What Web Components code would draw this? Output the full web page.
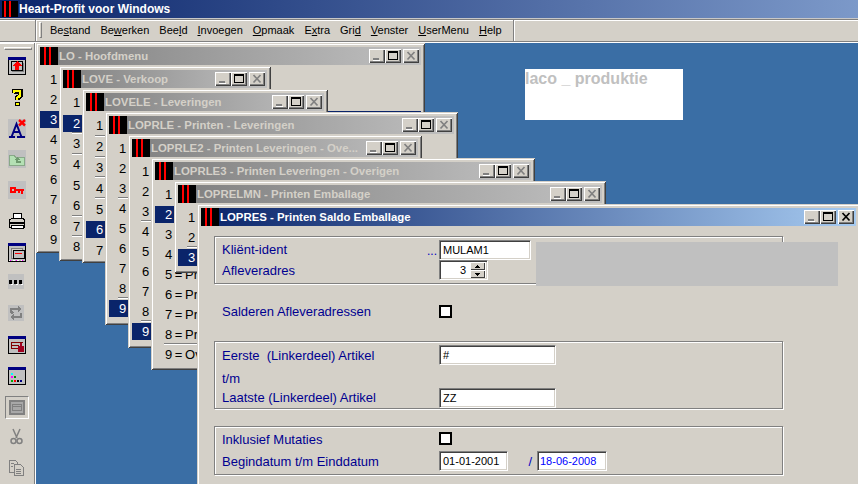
<!DOCTYPE html>
<html lang="nl">
<head>
<meta charset="utf-8">
<title>Heart-Profit voor Windows</title>
<style>
html, body { margin: 0; padding: 0; background: #d4d0c8; }
body { width: 858px; height: 484px; overflow: hidden; font-family: "Liberation Sans", Arial, sans-serif; }
</style>
</head>
<body>
<app-frame>
  <app-title slot="title">Heart-Profit voor Windows</app-title>
  <app-menu slot="menu">
    <span>Be<u>s</u>tand</span><span>Be<u>w</u>erken</span><span>Bee<u>l</u>d</span><span><u>I</u>nvoegen</span><span><u>O</u>pmaak</span><span>E<u>x</u>tra</span><span>Gri<u>d</u></span><span><u>V</u>enster</span><span><u>U</u>serMenu</span><span><u>H</u>elp</span>
  </app-menu>
  <tool-bar slot="tools">
    <svg viewBox="0 0 18 20"><rect width="18" height="18" fill="#000"/><rect x="1" y="3" width="16" height="14" fill="#c0c0c0"/><rect width="18" height="3" fill="#000080"/><rect x="4" y="6" width="12" height="9" fill="#808080"/><rect x="3.500" y="4.500" width="11" height="9" fill="#c0c0c0" stroke="#000"/><path d="M9 4l5 5h-3v4H7V9H4z" fill="#f00"/></svg>
    <svg viewBox="0 0 18 20"><path d="M6 5V3h6v5l-3 2v2" fill="none" stroke="#000" stroke-width="5"/><rect x="6.500" y="14" width="5" height="4" fill="#000"/><path d="M6 5V3h6v5l-3 2v2" fill="none" stroke="#ff0" stroke-width="2.500"/><rect x="7.500" y="15" width="3" height="2" fill="#ff0"/></svg>
    <svg viewBox="0 0 18 20" style="shape-rendering:auto"><rect width="18" height="19" fill="#c0c0c0"/><path d="M1 18h6M9 18h8M3.500 18L8.500 5l5 13M5 13h7" fill="none" stroke="#000080" stroke-width="2"/><path d="M11 1l6 5.500M17 1l-6 5.500" stroke="#f00" stroke-width="2.400"/></svg>
    <svg viewBox="0 0 18 20"><rect width="18" height="18" fill="#c0c0c0"/><path d="M1.500 5.500h5l1 2h9v8h-15z" fill="#b4e0b4" stroke="#88a888"/><path d="M9 7l-3 3h2v3h5v-2h-3v-1h2z" fill="#6f9a6f"/></svg>
    <svg viewBox="0 0 18 20"><rect width="18" height="18" fill="#c0c0c0"/><circle cx="5" cy="9" r="2.500" fill="none" stroke="#f00" stroke-width="2"/><path d="M7 8h9v2h-1v3h-2v-3h-1v2h-2v-2H7z" fill="#f00"/></svg>
    <svg viewBox="0 0 18 20"><path d="M5 1h8l1 5H5z" fill="#fff" stroke="#000"/><path d="M1.500 8l3-2h10l2 2v7h-15z" fill="#d4d0c8" stroke="#000"/><path d="M2 11h14" stroke="#000" stroke-width="2"/><rect x="3" y="13" width="12" height="3" fill="#fff" stroke="#000"/></svg>
    <svg viewBox="0 0 18 20"><rect width="18" height="19" fill="#000"/><rect x="1" y="3" width="16" height="15" fill="#c0c0c0"/><rect width="18" height="3" fill="#000080"/><rect x="3" y="5" width="11" height="10" fill="#d4d0c8" stroke="#808080"/><rect x="5" y="7" width="11" height="8" fill="#c0c0c0" stroke="#000"/><path d="M7 10h7" stroke="#f00"/><path d="M1 17h16" stroke="#fff" stroke-dasharray="2 2"/><path d="M2 17h14" stroke="#f0f" stroke-dasharray="1 5"/></svg>
    <svg viewBox="0 0 18 20"><rect width="16" height="15" fill="#c0c0c0"/><path d="M1 6h3v4H1zM6 6h3v4H6zM11 6h3v4h-3z" fill="#000"/><path d="M3 10h2M8 10h2M13 10h2" stroke="#fff"/></svg>
    <svg viewBox="0 0 18 20"><rect width="16" height="16" fill="#c0c0c0"/><path d="M3 8V4h8M3 9l2-2M13 8v4H5" fill="none" stroke="#808080" stroke-width="1.500"/><path d="M10 1l4 3-4 3zM6 9l-4 3 4 3z" fill="#808080"/></svg>
    <svg viewBox="0 0 18 20"><rect width="18" height="18" fill="#000"/><rect x="1" y="3" width="16" height="14" fill="#c0c0c0"/><rect width="18" height="3" fill="#000080"/><path d="M3 6v6h8M3 6h12M3 9h8" fill="none" stroke="#800000"/><rect x="10" y="10" width="6" height="6" rx="1" fill="#a00020"/><rect x="12" y="7" width="2" height="4" fill="#a00020"/></svg>
    <svg viewBox="0 0 18 20"><rect width="18" height="18" fill="#000"/><rect x="1" y="3" width="16" height="14" fill="#c0c0c0"/><rect width="18" height="3" fill="#000080"/><path d="M3 6h2v2H3z" fill="#0ff"/><path d="M3 9h2v2H3z" fill="#f0f"/><path d="M6 9h2v2H6z" fill="#080"/><path d="M3 13h2v2H3z" fill="#0a0"/><path d="M6 13h2v2H6z" fill="#f00"/><path d="M9 13h2v2H9z" fill="#000"/><path d="M12 13h2v2h-2z" fill="#000080"/></svg>
    <span class="pressed"><svg viewBox="0 0 16 16"><rect width="16" height="15" fill="#808080"/><rect x="2" y="2" width="12" height="11" fill="#a8a8a8"/><rect x="3.500" y="4.500" width="9" height="6" fill="none" stroke="#808080"/><path d="M4 6.500h8" stroke="#808080"/></svg></span>
    <svg viewBox="0 0 18 20" style="shape-rendering:auto"><path d="M5 1l4 9M12 1l-4 9" stroke="#808080" stroke-width="1.500"/><circle cx="5.500" cy="13" r="2.500" fill="none" stroke="#808080" stroke-width="1.500"/><circle cx="11.500" cy="13" r="2.500" fill="none" stroke="#808080" stroke-width="1.500"/></svg>
    <svg viewBox="0 0 18 20"><path d="M1.500 1.500h6l2 2v10h-8z" fill="#d4d0c8" stroke="#808080"/><path d="M6.500 5.500h6l3 3v8h-9z" fill="#d4d0c8" stroke="#808080"/><path d="M3 4.500h3M3 7.500h2M8 10.500h5M8 12.500h5M8 14.500h5" stroke="#808080"/></svg>
  </tool-bar>
  <mdi-area slot="mdi">
    <div class="banner">laco _ produktie</div>

    <mdi-window caption="LO - Hoofdmenu" x="0" y="0" w="389" h="210">
      <row-item>1</row-item><row-item>2</row-item><row-item sel>3</row-item><row-item>4</row-item><row-item>5</row-item><row-item>6</row-item><row-item>7</row-item><row-item>8</row-item><row-item>9</row-item>
    </mdi-window>
    <mdi-window caption="LOVE - Verkoop" x="23" y="23" w="212" h="195" row="20.6">
      <row-item>1</row-item><row-item sel>2</row-item><row-item rule>3</row-item><row-item rule>4</row-item><row-item>5</row-item><row-item>6</row-item><row-item rule>7</row-item><row-item rule>8</row-item>
    </mdi-window>
    <mdi-window caption="LOVELE - Leveringen" x="46" y="46" w="246" h="174" row="20.8">
      <row-item>1</row-item><row-item rule>2</row-item><row-item rule>3</row-item><row-item rule>4</row-item><row-item rule>5</row-item><row-item sel>6</row-item><row-item>7</row-item>
    </mdi-window>
    <mdi-window caption="LOPRLE - Printen - Leveringen" x="69" y="69" w="353" h="213">
      <row-item>1</row-item><row-item>2</row-item><row-item>3</row-item><row-item rule>4</row-item><row-item>5</row-item><row-item>6</row-item><row-item>7</row-item><row-item>8</row-item><row-item sel rule>9</row-item>
    </mdi-window>
    <mdi-window caption="LOPRLE2 - Printen Leveringen - Ove..." x="92" y="92" w="294" h="213">
      <row-item>1</row-item><row-item>2</row-item><row-item>3</row-item><row-item rule>4</row-item><row-item>5</row-item><row-item>6</row-item><row-item>7</row-item><row-item>8</row-item><row-item sel rule>9</row-item>
    </mdi-window>
    <mdi-window caption="LOPRLE3 - Printen Leveringen - Overigen" x="115" y="115" w="384" h="212">
      <row-item>1</row-item><row-item sel>2</row-item><row-item>3</row-item><row-item>4</row-item><row-item>5 = Pr</row-item><row-item>6 = Pr</row-item><row-item>7 = Pr</row-item><row-item>8 = Pr</row-item><row-item rule>9 = Ov</row-item>
    </mdi-window>
    <mdi-window caption="LOPRELMN - Printen Emballage" x="138" y="138" w="432" h="92">
      <row-item>1</row-item><row-item>2</row-item><row-item sel rule>3</row-item>
    </mdi-window>

    <mdi-window caption="LOPRES - Printen Saldo Emballage" x="161" y="161" w="663" h="300" active>
      <print-form>
        <form-group>
          <form-row h="21" label="Kliënt-ident"><span slot="prefix" class="dots">...</span><text-field w="92">MULAM1</text-field></form-row>
          <form-row h="20" label="Afleveradres"><spin-field>3</spin-field></form-row>
        </form-group>
        <form-row class="free" h="13" label="Salderen Afleveradressen"><check-box></check-box></form-row>
        <form-group class="second">
          <form-row h="20" label="Eerste  (Linkerdeel) Artikel"><text-field w="117">#</text-field></form-row>
          <form-row class="tm" h="23" label="t/m"></form-row>
          <form-row class="last" h="20" label="Laatste (Linkerdeel) Artikel"><text-field w="117">ZZ</text-field></form-row>
        </form-group>
        <form-group class="third">
          <form-row h="17" label="Inklusief Mutaties"><check-box class="up"></check-box></form-row>
          <form-row h="20" label="Begindatum t/m Einddatum"><text-field w="69">01-01-2001</text-field><span class="slash">/</span><text-field w="70" blue>18-06-2008</text-field></form-row>
        </form-group>
        <div class="blank"></div>
      </print-form>
    </mdi-window>
  </mdi-area>
</app-frame>

<script>
const makeTemplate = (html) => {
    const t = document.createElement('template')
    t.innerHTML = html
    return t
}

class ShadowBase extends HTMLElement {
    constructor() {
        super()
        this.attachShadow({mode: 'open'})
        this.shadowRoot.appendChild(this.constructor.template.content.cloneNode(true))
    }
}

class AppFrame extends ShadowBase {
    static template = makeTemplate(`
<style>
:host { display: grid; grid-template-columns: 36px 822px; grid-template-rows: 18px 25px 441px; width: 858px; height: 484px; overflow: hidden; }
</style>
<slot name="title"></slot>
<slot name="menu"></slot>
<slot name="tools"></slot>
<slot name="mdi"></slot>
`)
}

class AppTitle extends ShadowBase {
    static template = makeTemplate(`
<style>
:host { display: flex; grid-column: 1 / 3; align-items: center; height: 18px; color: #fff; font: bold 12px "Liberation Sans", sans-serif; background: linear-gradient(90deg, #0a246a, #7c99c9); }
.logo { width: 16px; height: 16px; margin: 0 1px 0 2px; background: linear-gradient(90deg, #000 2px, #f00 2px, #f00 4px, #000 4px, #000 7px, #f00 7px, #f00 9px, #000 9px); }
</style>
<div class="logo"></div><slot></slot>
`)
}

class AppMenu extends ShadowBase {
    static template = makeTemplate(`
<style>
:host { display: flex; grid-column: 1 / 3; align-items: center; box-sizing: border-box; height: 25px; padding-bottom: 2px; background: #d4d0c8; border-top: 1px solid #c8c8c8; box-shadow: inset 0 1px 0 #808080, inset 0 2px 0 #fff, inset 0 -1px 0 #fff, inset 0 -2px 0 #808080; font: 11px "Liberation Sans", sans-serif; color: #000; }
.edge { width: 2px; height: 21px; margin-left: 35px; border-left: 1px solid #808080; border-right: 1px solid #fff; box-sizing: border-box; }
.grip { width: 3px; height: 16px; margin: 0 8px 0 2px; border: 1px solid; border-color: #fff #808080 #808080 #fff; box-sizing: border-box; }
.items { display: flex; gap: 10px; width: 463px; }
.end { width: 2px; height: 21px; border-left: 1px solid #808080; border-right: 1px solid #fff; box-sizing: border-box; }
</style>
<div class="edge"></div><div class="grip"></div><div class="items"><slot></slot></div><div class="end"></div>
`)
}

class ToolBar extends ShadowBase {
    static template = makeTemplate(`
<style>
:host { display: flex; flex-direction: column; box-sizing: border-box; width: 36px; height: 441px; padding: 4px 0 0 8px; background: #d4d0c8; border-right: 1px solid #fff; box-shadow: inset -1px 0 0 #808080, inset 0 1px 0 #fff; position: relative; }
.grip { position: absolute; left: 4px; top: 4px; width: 28px; height: 3px; box-sizing: border-box; border: 1px solid; border-color: #fff #808080 #808080 #fff; }
.gap { height: 10px; flex: none; }
::slotted(svg) { display: block; flex: none; width: 18px; height: 20px; margin-bottom: 11px; shape-rendering: crispEdges; }
::slotted(.pressed) { display: flex; flex: none; align-items: center; justify-content: center; width: 24px; height: 23px; margin: -2px 0 9px -3px; box-sizing: border-box; border: 1px solid; border-color: #808080 #fff #fff #808080; }
</style>
<div class="grip"></div><div class="gap"></div><slot></slot>
`)
    connectedCallback() {
        const pressed = this.querySelector('.pressed svg')
        pressed.style.cssText = 'width:16px;height:16px;display:block;shape-rendering:crispEdges'
    }
}

class MdiArea extends ShadowBase {
    static template = makeTemplate(`
<style>
:host { display: block; position: relative; width: 822px; height: 441px; overflow: hidden; background: #3a6ea5; }
::slotted(.banner) { position: absolute; left: 489px; top: 26px; width: 158px; height: 51px; background: #fff; color: #c0c0c0; font: bold 16px/19px "Liberation Sans", sans-serif; }
</style>
<slot></slot>
`)
}

class MdiWindow extends ShadowBase {
    static template = makeTemplate(`
<style>
:host { position: absolute; display: block; box-sizing: border-box; padding: 4px; overflow: hidden; background: #d4d0c8; box-shadow: inset 1px 1px 0 #d4d0c8, inset -1px -1px 0 #404040, inset 2px 2px 0 #fff, inset -2px -2px 0 #808080; }
.bar { display: flex; align-items: center; height: 18px; box-sizing: border-box; color: #d4d0c8; font: bold 11.400px "Liberation Sans", sans-serif; background: linear-gradient(90deg, #808080, #c0c0c0); white-space: nowrap; }
:host([active]) .bar { color: #fff; background: linear-gradient(90deg, #0a246a, #a6caf0); }
.logo { flex: none; width: 18px; height: 18px; margin-right: 1px; background: linear-gradient(90deg, #000 4px, #f00 4px, #f00 6px, #000 6px, #000 9px, #f00 9px, #f00 11px, #000 11px); }
.cap { flex: 1; }
.btn { flex: none; width: 16px; height: 14px; background: #d4d0c8; box-shadow: inset 1px 1px 0 #fff, inset -1px -1px 0 #404040, inset -2px -2px 0 #808080; }
.btn svg { display: block; width: 16px; height: 14px; shape-rendering: crispEdges; }
.btn.close { margin: 0 2px 0 2px; }
.x { stroke: #808080; }
:host([active]) .x { stroke: #000; }
.body { display: block; padding-top: 4px; }
:host([active]) .body { padding-top: 0; }
</style>
<div class="bar">
  <div class="logo"></div><div class="cap"></div>
  <div class="btn"><svg viewBox="0 0 16 14"><rect x="4" y="9" width="6" height="2" fill="#808080"/><rect x="4" y="11" width="7" height="1" fill="#fff"/></svg></div>
  <div class="btn"><svg viewBox="0 0 16 14"><rect x="3" y="2" width="10" height="2" fill="#000"/><rect x="3.500" y="2.500" width="9" height="8" fill="none" stroke="#000"/></svg></div>
  <div class="btn close"><svg viewBox="0 0 16 14" style="shape-rendering:auto"><path d="M4.500 3l7 7.500M11.500 3l-7 7.500" class="x" stroke-width="1.700"/></svg></div>
</div>
<div class="body"><slot></slot></div>
`)
    connectedCallback() {
        const attr = (n) => this.getAttribute(n)
        this.style.left = attr('x') + 'px'
        this.style.top = attr('y') + 'px'
        this.style.width = attr('w') + 'px'
        this.style.height = attr('h') + 'px'
        this.style.setProperty('--row', (attr('row') || 20) + 'px')
        this.shadowRoot.querySelector('.cap').textContent = attr('caption')
    }
}

class RowItem extends ShadowBase {
    static template = makeTemplate(`
<style>
:host { display: block; position: relative; height: var(--row, 20px); font: 13px "Liberation Sans", sans-serif; word-spacing: -1px; color: #000; white-space: nowrap; }
.in { display: flex; align-items: center; position: absolute; left: 0; right: 0; top: 50%; height: 17px; margin-top: -8px; padding-left: 10px; }
:host([sel]) .in { background: #0a246a; color: #fff; }
.rule { display: none; position: absolute; left: 9px; right: 0; top: -1px; height: 1px; background: #808080; box-shadow: 0 1px 0 #fff; }
:host([rule]) .rule { display: block; }
</style>
<div class="rule"></div><div class="in"><slot></slot></div>
`)
}

class PrintForm extends ShadowBase {
    static template = makeTemplate(`
<style>
:host { display: block; position: relative; padding: 10px 0 0 13px; }
::slotted(.free) { margin: 21px 0 23px 8px; }
::slotted(.second) { --group-top: 3px; --group-bottom: 0; }
::slotted(.third) { margin-top: 17px; --group-top: 4px; --group-gap: 3px; }
::slotted(.blank) { position: absolute; left: 335px; top: 16px; width: 302px; height: 44px; background: #c0c0c0; }
</style>
<slot></slot>
`)
}

class FormGroup extends ShadowBase {
    static template = makeTemplate(`
<style>
:host { display: flex; flex-direction: column; gap: var(--group-gap, 0); box-sizing: border-box; width: 569px; padding: var(--group-top, 2px) 0 var(--group-bottom, 3px) 7px; border: 1px solid #808080; box-shadow: 1px 1px 0 #fff, inset 1px 1px 0 #fff; }
::slotted(.tm) { box-sizing: border-box; padding-top: 3px; }
</style>
<slot></slot>
`)
}

class FormRow extends ShadowBase {
    static template = makeTemplate(`
<style>
:host { display: flex; align-items: center; font: 13px "Liberation Sans", sans-serif; color: #000090; white-space: pre; }
.label { flex: none; display: flex; justify-content: space-between; width: 217px; }
:host(.last) .text { position: relative; top: -1px; }
.controls { display: flex; align-items: center; }
::slotted(.dots) { color: #0000c0; margin-right: 2px; font-size: 12px; position: relative; top: 2px; }
::slotted(.slash) { color: #0000c0; width: 29px; text-align: right; padding-right: 5px; box-sizing: border-box; font-size: 13px; }
</style>
<div class="label"><span class="text"></span><slot name="prefix"></slot></div>
<div class="controls"><slot></slot></div>
`)
    connectedCallback() {
        this.style.height = this.getAttribute('h') + 'px'
        this.shadowRoot.querySelector('.text').textContent = this.getAttribute('label')
    }
}

class TextField extends ShadowBase {
    static template = makeTemplate(`
<style>
:host { display: flex; align-items: center; box-sizing: border-box; height: 20px; padding-left: 3px; background: #fff; border: 1px solid; border-color: #808080 #fff #fff #808080; box-shadow: inset 1px 1px 0 #404040, inset -1px -1px 0 #d4d0c8; font: 11px "Liberation Sans", sans-serif; color: #000; }
:host([blue]) { color: #0000ff; padding-left: 2px; }
</style>
<slot></slot>
`)
    connectedCallback() {
        this.style.width = this.getAttribute('w') + 'px'
    }
}

class SpinField extends ShadowBase {
    static template = makeTemplate(`
<style>
:host { display: flex; box-sizing: border-box; width: 49px; height: 20px; background: #fff; border: 1px solid; border-color: #808080 #fff #fff #808080; box-shadow: inset 1px 1px 0 #404040, inset -1px -1px 0 #d4d0c8; font: 11px "Liberation Sans", sans-serif; color: #000; }
.val { flex: 1; display: flex; align-items: center; justify-content: flex-end; padding-right: 4px; }
.btns { display: flex; flex-direction: column; width: 15px; margin: 1px 2px 1px 0; }
.b { flex: 1; display: flex; align-items: center; justify-content: center; background: #d4d0c8; box-shadow: inset 1px 1px 0 #fff, inset -1px -1px 0 #404040; }
.b svg { width: 5px; height: 3px; display: block; shape-rendering: crispEdges; }
</style>
<div class="val"><slot></slot></div>
<div class="btns">
  <div class="b"><svg viewBox="0 0 5 3"><path d="M2 0h1v1h1v1h1v1H0V2h1V1h1z"/></svg></div>
  <div class="b"><svg viewBox="0 0 5 3"><path d="M0 0h5v1H4v1H3v1H2V2H1V1H0z"/></svg></div>
</div>
`)
}

class CheckBox extends ShadowBase {
    static template = makeTemplate(`
<style>
:host { display: block; box-sizing: border-box; width: 13px; height: 13px; border: 2px solid #000; background: #fff; }
:host(.up) { margin-top: -2px; }
</style>
`)
}

customElements.define('app-frame', AppFrame)
customElements.define('app-title', AppTitle)
customElements.define('app-menu', AppMenu)
customElements.define('tool-bar', ToolBar)
customElements.define('mdi-area', MdiArea)
customElements.define('mdi-window', MdiWindow)
customElements.define('row-item', RowItem)
customElements.define('print-form', PrintForm)
customElements.define('form-group', FormGroup)
customElements.define('form-row', FormRow)
customElements.define('text-field', TextField)
customElements.define('spin-field', SpinField)
customElements.define('check-box', CheckBox)
</script>
</body>
</html>
